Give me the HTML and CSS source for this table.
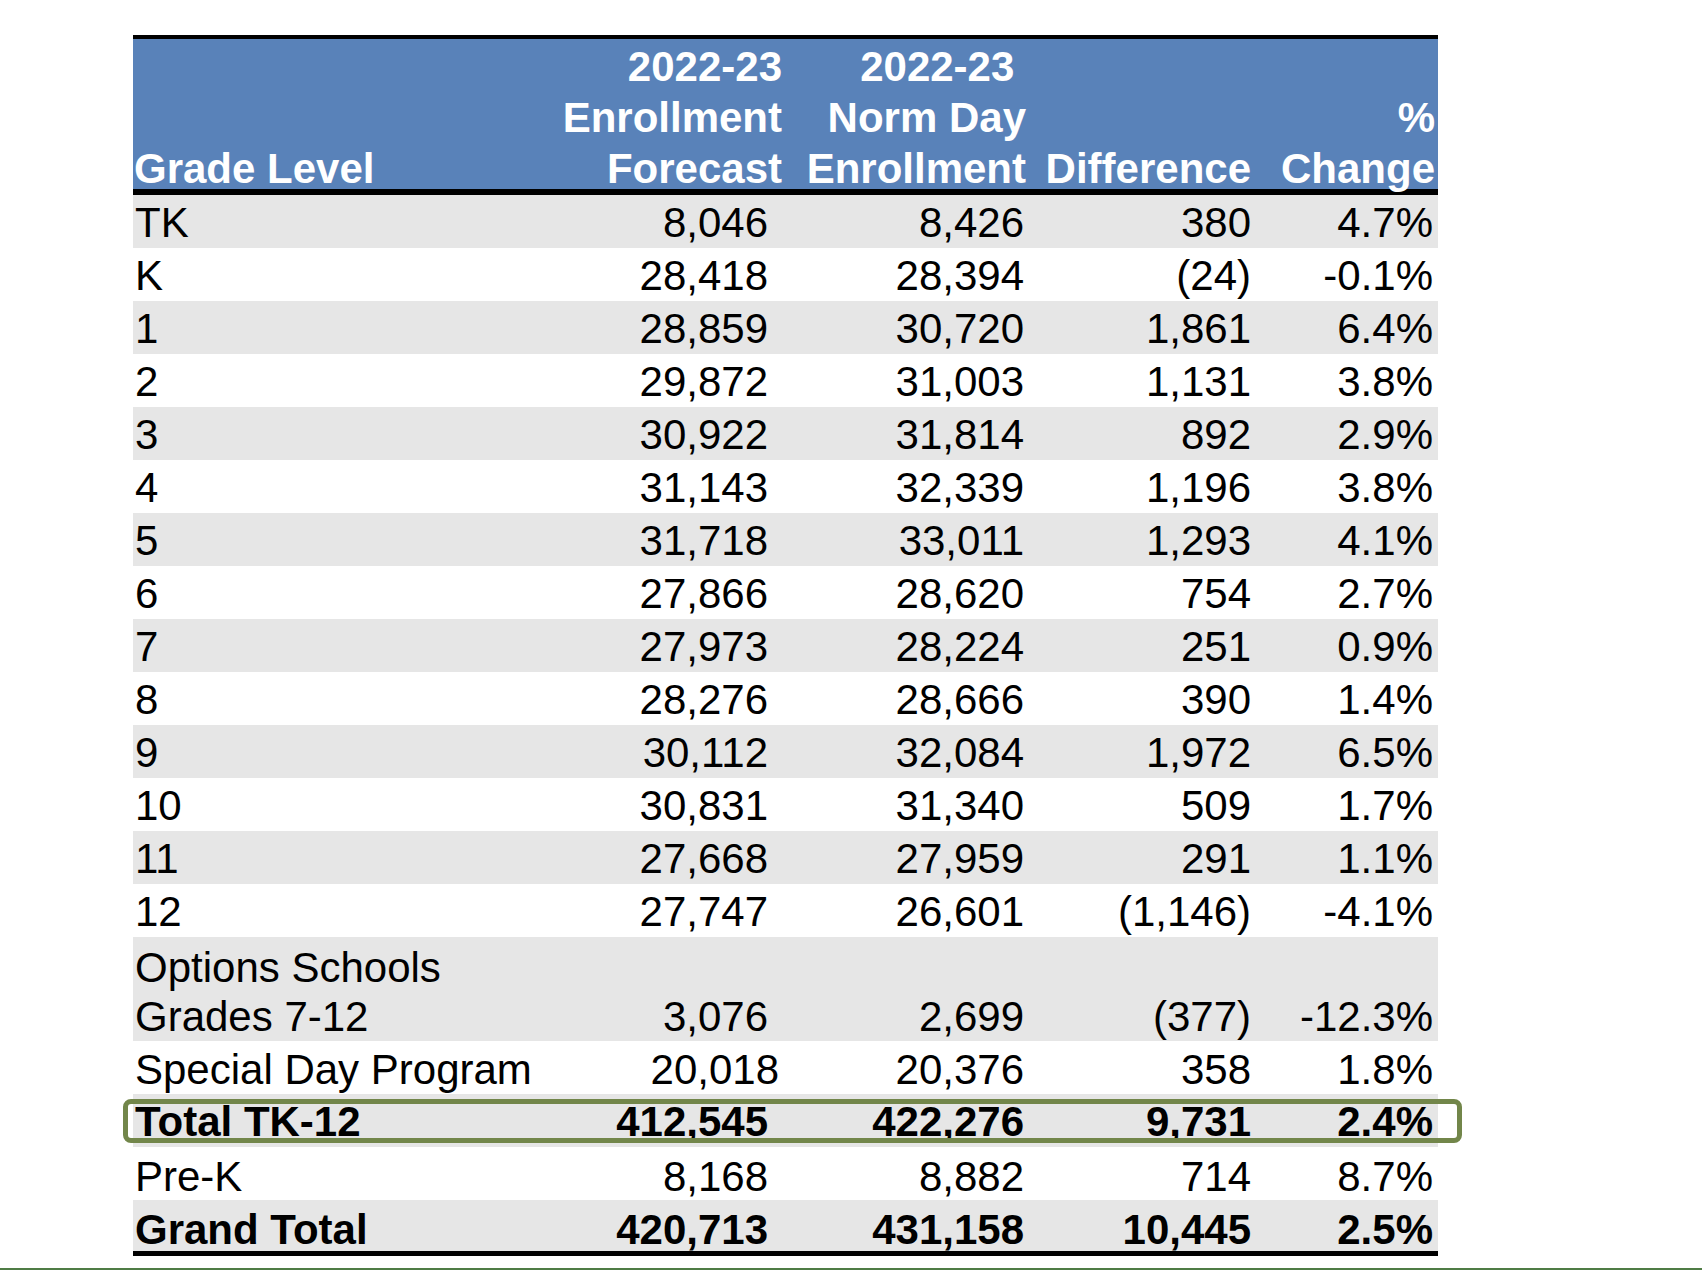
FILE: index.html
```html
<!DOCTYPE html>
<html lang="en">
<head>
<meta charset="utf-8">
<title>Enrollment Forecast vs Norm Day</title>
<link rel="stylesheet" href="styles.css">
</head>
<body>
<div class="sheet">
  <div class="grid head">
    <div class="c0">Grade Level</div>
    <div class="c1">2022-23<br>Enrollment<br>Forecast</div>
    <div class="c2">2022-23&nbsp;<br>Norm Day<br>Enrollment</div>
    <div class="c3">Difference</div>
    <div class="c4">%<br>Change</div>
  </div>
  <div class="grid row alt"><div class="c0">TK</div><div class="c1">8,046</div><div class="c2">8,426</div><div class="c3">380</div><div class="c4">4.7%</div></div>
  <div class="grid row"><div class="c0">K</div><div class="c1">28,418</div><div class="c2">28,394</div><div class="c3">(24)</div><div class="c4">-0.1%</div></div>
  <div class="grid row alt"><div class="c0">1</div><div class="c1">28,859</div><div class="c2">30,720</div><div class="c3">1,861</div><div class="c4">6.4%</div></div>
  <div class="grid row"><div class="c0">2</div><div class="c1">29,872</div><div class="c2">31,003</div><div class="c3">1,131</div><div class="c4">3.8%</div></div>
  <div class="grid row alt"><div class="c0">3</div><div class="c1">30,922</div><div class="c2">31,814</div><div class="c3">892</div><div class="c4">2.9%</div></div>
  <div class="grid row"><div class="c0">4</div><div class="c1">31,143</div><div class="c2">32,339</div><div class="c3">1,196</div><div class="c4">3.8%</div></div>
  <div class="grid row alt"><div class="c0">5</div><div class="c1">31,718</div><div class="c2">33,011</div><div class="c3">1,293</div><div class="c4">4.1%</div></div>
  <div class="grid row"><div class="c0">6</div><div class="c1">27,866</div><div class="c2">28,620</div><div class="c3">754</div><div class="c4">2.7%</div></div>
  <div class="grid row alt"><div class="c0">7</div><div class="c1">27,973</div><div class="c2">28,224</div><div class="c3">251</div><div class="c4">0.9%</div></div>
  <div class="grid row"><div class="c0">8</div><div class="c1">28,276</div><div class="c2">28,666</div><div class="c3">390</div><div class="c4">1.4%</div></div>
  <div class="grid row alt"><div class="c0">9</div><div class="c1">30,112</div><div class="c2">32,084</div><div class="c3">1,972</div><div class="c4">6.5%</div></div>
  <div class="grid row"><div class="c0">10</div><div class="c1">30,831</div><div class="c2">31,340</div><div class="c3">509</div><div class="c4">1.7%</div></div>
  <div class="grid row alt"><div class="c0">11</div><div class="c1">27,668</div><div class="c2">27,959</div><div class="c3">291</div><div class="c4">1.1%</div></div>
  <div class="grid row"><div class="c0">12</div><div class="c1">27,747</div><div class="c2">26,601</div><div class="c3">(1,146)</div><div class="c4">-4.1%</div></div>
  <div class="grid row alt tall"><div class="c0">Options Schools<br>Grades 7-12</div><div class="c1">3,076</div><div class="c2">2,699</div><div class="c3">(377)</div><div class="c4">-12.3%</div></div>
  <div class="grid row sdp mid"><div class="c0">Special Day Program</div><div class="c1">20,018</div><div class="c2">20,376</div><div class="c3">358</div><div class="c4">1.8%</div></div>
  <div class="grid row alt bold"><div class="c0">Total TK-12</div><div class="c1">412,545</div><div class="c2">422,276</div><div class="c3">9,731</div><div class="c4">2.4%</div></div>
  <div class="grid row low"><div class="c0">Pre-K</div><div class="c1">8,168</div><div class="c2">8,882</div><div class="c3">714</div><div class="c4">8.7%</div></div>
  <div class="grid row alt bold grand low"><div class="c0">Grand Total</div><div class="c1">420,713</div><div class="c2">431,158</div><div class="c3">10,445</div><div class="c4">2.5%</div></div>
  <div class="highlight"></div>
</div>
<div class="page-rule"></div>
</body>
</html>
```

FILE: styles.css
```css
html, body {
  margin: 0;
  padding: 0;
  background: #ffffff;
}

body {
  font-family: "Liberation Sans", Arial, Helvetica, sans-serif;
  color: #000000;
  overflow: hidden;
}

.sheet {
  position: relative;
  width: 1305px;
  margin: 35px 0 0 133px;
}

.grid {
  display: grid;
  grid-template-columns: 422px 229px 244px 225px 185px;
}

.grid > div {
  white-space: nowrap;
  text-align: right;
}

.grid > .c0 {
  text-align: left;
}

/* header */
.head {
  background: #5982b9;
  border-top: 4px solid #000000;
  border-bottom: 6px solid #000000;
  height: 150px;
  align-items: end;
  color: #ffffff;
  font-weight: bold;
  font-size: 42px;
  line-height: 51px;
}

.head > div {
  margin-bottom: -5px;
  padding-right: 2px;
}

.head > .c0 {
  padding-left: 1px;
}

.head > .c4 {
  padding-right: 3px;
}

/* body rows */
.row {
  font-size: 42px;
  background: #ffffff;
}

.row > div {
  padding-top: 3px;
  padding-bottom: 1px;
  line-height: 49px;
}

.row.mid > div {
  padding-top: 4px;
  padding-bottom: 0;
  line-height: 49px;
}

.row.low > div {
  padding-top: 6px;
  padding-bottom: 0;
  line-height: 47px;
}

.row > .c0 { padding-left: 2px; }
.row > .c1 { padding-right: 16px; }
.row > .c2 { padding-right: 4px; }
.row > .c3 { padding-right: 2px; }
.row > .c4 { padding-right: 5px; }

.row.sdp > .c1 { padding-right: 5px; }

.row.alt {
  background: #e6e6e6;
}

.row.tall {
  align-items: end;
}

.row.tall > div {
  padding-top: 6px;
  padding-bottom: 0;
  line-height: 49px;
}

.row.bold {
  font-weight: bold;
}

.row.grand {
  height: 51px;
  border-bottom: 5px solid #000000;
}

/* callout box over the Total TK-12 row */
.highlight {
  position: absolute;
  left: -10px;
  top: 1064px;
  width: 1339px;
  height: 44px;
  box-sizing: border-box;
  border: 5px solid #72864a;
  border-radius: 8px;
}

.page-rule {
  margin-top: 12px;
  height: 2px;
  background: #4f7c45;
}
```
